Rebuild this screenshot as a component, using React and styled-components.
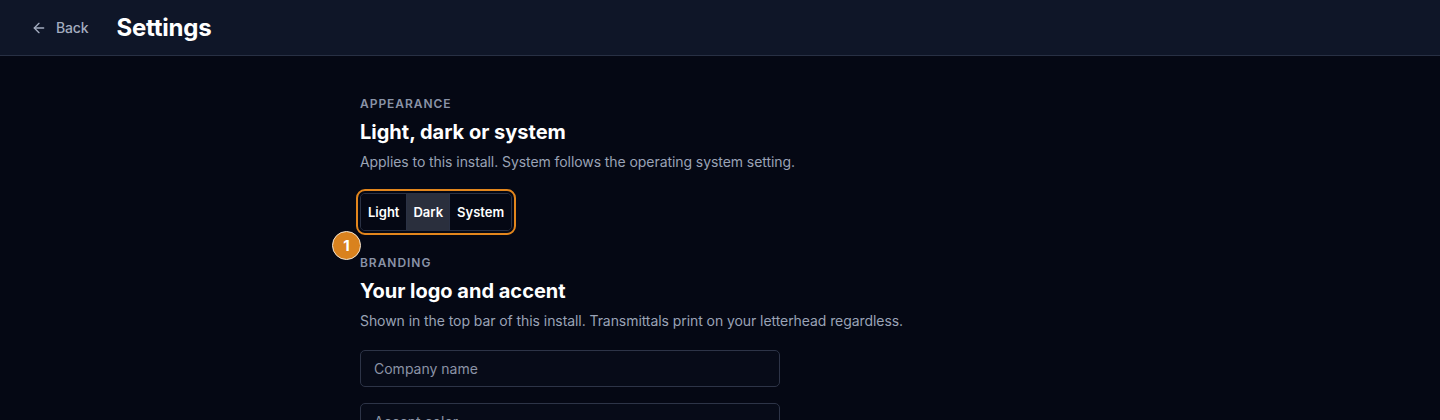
import { useState } from "react";
import styled, { createGlobalStyle } from "styled-components";
import { ArrowLeft } from "lucide-react";

const GlobalStyle = createGlobalStyle`
    html, body {
        margin: 0;
        padding: 0;
        background: #050814;
        font-family: Inter, "Noto Sans", sans-serif;
        -webkit-font-smoothing: antialiased;
    }
    * {
        box-sizing: border-box;
    }
`;

const THEMES = ["Light", "Dark", "System"];

const App = () => {
    const [theme, setTheme] = useState("Dark");

    return (
        <>
            <GlobalStyle />
            <Page>
                <TopBar>
                    <BackButton>
                        <ArrowLeft size={16} strokeWidth={2} />
                        Back
                    </BackButton>
                    <PageTitle>Settings</PageTitle>
                </TopBar>
                <Content>
                    <Section>
                        <Eyebrow>Appearance</Eyebrow>
                        <SectionTitle>Light, dark or system</SectionTitle>
                        <SectionHint>
                            Applies to this install. System follows the operating system setting.
                        </SectionHint>
                        <SegmentWrap>
                            <Segmented>
                                {THEMES.map((item) => (
                                    <Segment
                                        key={item}
                                        $active={theme === item}
                                        onClick={() => setTheme(item)}
                                    >
                                        {item}
                                    </Segment>
                                ))}
                            </Segmented>
                            <StepBadge>1</StepBadge>
                        </SegmentWrap>
                    </Section>
                    <Section>
                        <Eyebrow>Branding</Eyebrow>
                        <SectionTitle>Your logo and accent</SectionTitle>
                        <SectionHint>
                            Shown in the top bar of this install. Transmittals print on your letterhead regardless.
                        </SectionHint>
                        <Fields>
                            <TextField placeholder="Company name" />
                            <TextField placeholder="Accent color" />
                        </Fields>
                    </Section>
                </Content>
            </Page>
        </>
    );
};

export default App;

const Page = styled.div`
    min-height: 420px;
    background: #050814;
    color: #f5f7fb;
`;

const TopBar = styled.header`
    display: flex;
    align-items: center;
    gap: 28px;
    height: 56px;
    padding: 0 31px;
    background: #0f1628;
    border-bottom: 1px solid #283044;
`;

const BackButton = styled.button`
    display: flex;
    align-items: center;
    gap: 9px;
    margin: 0;
    padding: 0;
    border: 0;
    background: none;
    color: #a3acbf;
    font-family: inherit;
    font-size: 14px;
    font-weight: 500;
    letter-spacing: -0.01em;
    cursor: pointer;
`;

const PageTitle = styled.h1`
    margin: 0;
    font-size: 24px;
    font-weight: 700;
    color: #ffffff;
    letter-spacing: -0.01em;
`;

const Content = styled.main`
    max-width: 720px;
    margin: 0 auto;
    padding-top: 40px;
    display: flex;
    flex-direction: column;
    gap: 24px;
`;

const Section = styled.section`
    display: flex;
    flex-direction: column;
    align-items: flex-start;
`;

const Eyebrow = styled.div`
    font-size: 12px;
    line-height: 16px;
    font-weight: 600;
    letter-spacing: 0.08em;
    text-transform: uppercase;
    color: #8a93a7;
`;

const SectionTitle = styled.h2`
    margin: 6px 0 0;
    font-size: 20px;
    line-height: 28px;
    font-weight: 700;
    color: #ffffff;
`;

const SectionHint = styled.p`
    margin: 6px 0 0;
    font-size: 14px;
    line-height: 20px;
    letter-spacing: -0.005em;
    color: #9aa3b6;
`;

const SegmentWrap = styled.div`
    position: relative;
    margin-top: 21px;
`;

const Segmented = styled.div`
    display: flex;
    height: 38px;
    border: 1px solid #2a3144;
    border-radius: 5px;
    overflow: hidden;
    outline: 2px solid #e3861d;
    outline-offset: 2px;
`;

const Segment = styled.button`
    margin: 0;
    padding: 0 6px;
    border: 0;
    border-left: 1px solid ${(p) => (p.$active ? "#2a3144" : "transparent")};
    border-right: 1px solid ${(p) => (p.$active ? "#2a3144" : "transparent")};
    background: ${(p) => (p.$active ? "#2a2f3d" : "#050814")};
    color: #ffffff;
    font-family: inherit;
    font-size: 13px;
    font-weight: 600;
    cursor: pointer;
`;

const StepBadge = styled.span`
    position: absolute;
    left: -28px;
    top: 38px;
    width: 29px;
    height: 29px;
    display: flex;
    align-items: center;
    justify-content: center;
    border-radius: 50%;
    border: 1.5px solid #f3e6d3;
    background: #d9821e;
    color: #ffffff;
    font-size: 15px;
    font-weight: 700;
`;

const Fields = styled.div`
    display: flex;
    flex-direction: column;
    gap: 16px;
    margin-top: 19px;
`;

const TextField = styled.input`
    width: 420px;
    height: 37px;
    padding: 0 13px;
    border: 1px solid #2d3447;
    border-radius: 5px;
    background: #070b18;
    color: #f5f7fb;
    font-family: inherit;
    font-size: 14px;
    outline: none;
    &::placeholder {
        color: #8b93a6;
    }
`;
